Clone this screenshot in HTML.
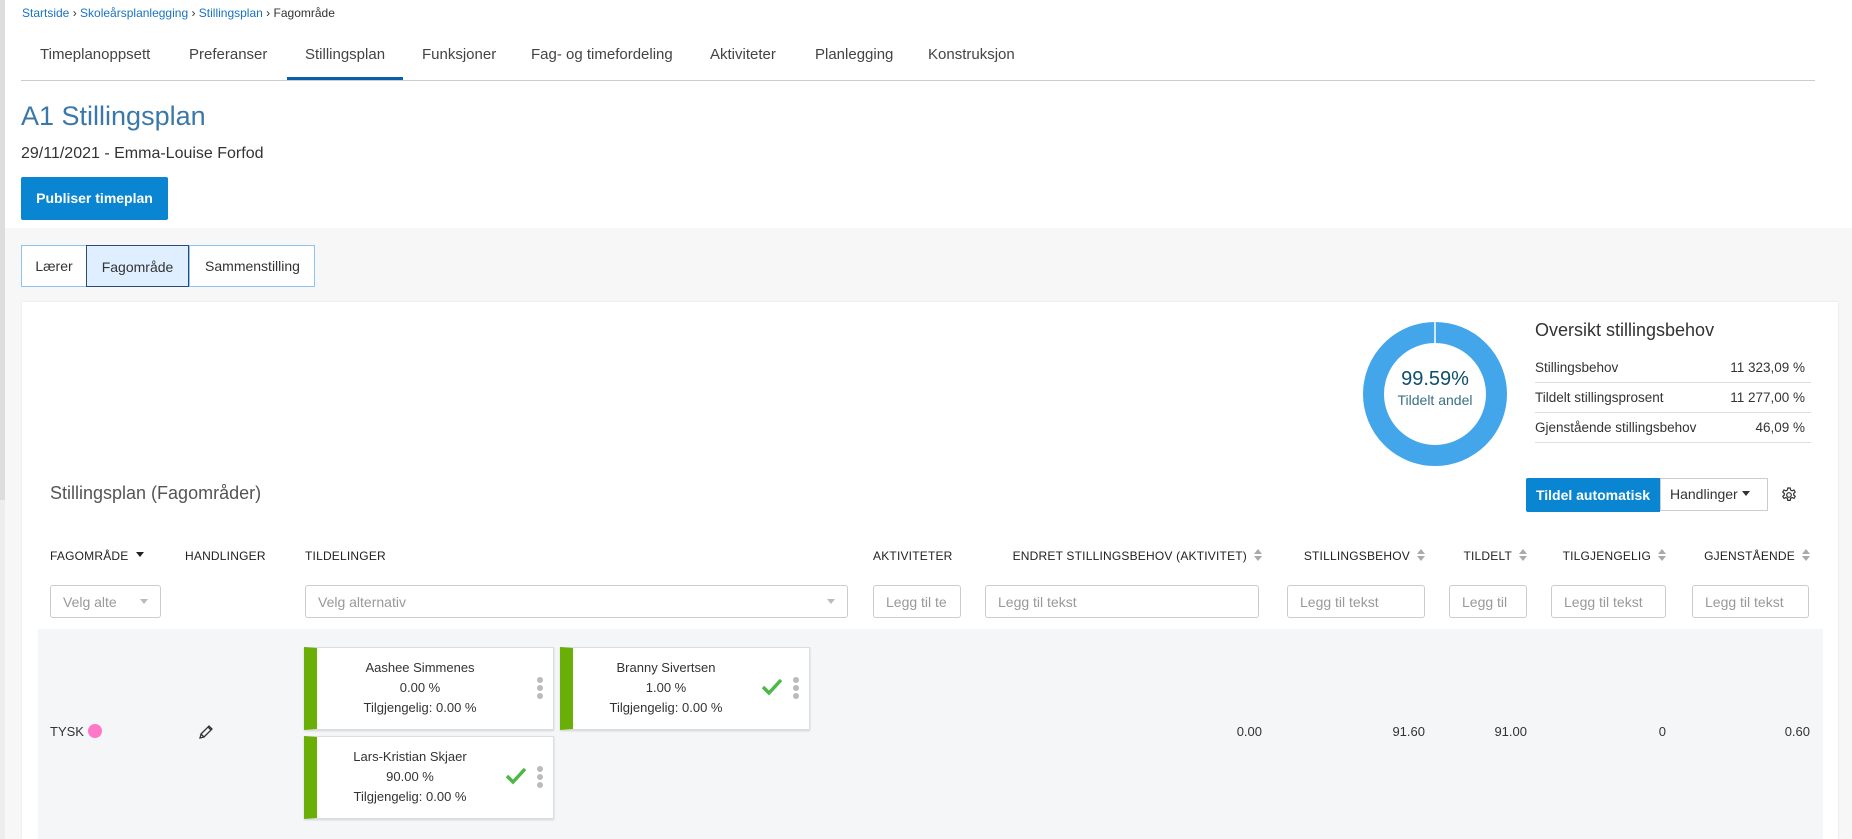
<!DOCTYPE html>
<html><head><meta charset="utf-8"><style>
*{box-sizing:border-box;margin:0;padding:0}
body{width:1852px;height:839px;overflow:hidden;background:#fff;font-family:"Liberation Sans",sans-serif;color:#333;position:relative}
.a{position:absolute;white-space:nowrap}
.bc{top:6px;font-size:12px;color:#1a73c0}
.tab{top:46px;font-size:15px;color:#444}
.hd{font-size:12px;color:#222;top:549px;letter-spacing:.2px}
.inp{position:absolute;top:585px;height:33px;border:1px solid #ccc;border-radius:3px;background:#fff;font-size:14px;color:#999;padding:8px 0 0 12px;overflow:hidden;white-space:nowrap}
.sort{display:inline-block;width:8px;height:12px;vertical-align:-1px;margin-left:7px;position:relative}
.sort:before{content:"";position:absolute;left:0;top:0;border:4px solid transparent;border-bottom:5px solid #aaa;border-top:0}
.sort:after{content:"";position:absolute;left:0;top:7px;border:4px solid transparent;border-top:5px solid #aaa;border-bottom:0}
.card{position:absolute;width:250px;height:83px;background:#fff;border:1px solid #ddd;box-shadow:0 1px 2px rgba(0,0,0,.15);border-left:13px solid #6aaf08;font-size:13px;color:#333;text-align:center;line-height:20px;padding-top:10px;padding-right:50px}
.dots{position:absolute;right:10px;top:29px;width:6px}
.dots i{display:block;width:6px;height:6px;border-radius:3px;background:#bbb;margin-bottom:2px}
.chk{position:absolute;top:30px}
.val{top:724px;font-size:13px;color:#333}
</style></head><body>
<div class="a" style="left:0;top:0;width:5px;height:500px;background:#ddd"></div>
<div class="a" style="left:0;top:500px;width:5px;height:339px;background:#eee"></div>
<div class="a bc" style="left:22px">Startside <span style="color:#333">&#x203A;</span> Skoleårsplanlegging <span style="color:#333">&#x203A;</span> Stillingsplan <span style="color:#333">&#x203A;</span> <span style="color:#333">Fagområde</span></div>
<div class="a tab" style="left:40px">Timeplanoppsett</div>
<div class="a tab" style="left:189px">Preferanser</div>
<div class="a tab" style="left:305px">Stillingsplan</div>
<div class="a tab" style="left:422px">Funksjoner</div>
<div class="a tab" style="left:531px">Fag- og timefordeling</div>
<div class="a tab" style="left:710px">Aktiviteter</div>
<div class="a tab" style="left:815px">Planlegging</div>
<div class="a tab" style="left:928px">Konstruksjon</div>
<div class="a" style="left:21px;top:80px;width:1794px;height:1px;background:#ccc"></div>
<div class="a" style="left:287px;top:77px;width:116px;height:3px;background:#0a5ea8"></div>
<div class="a" style="left:21px;top:101px;font-size:27px;color:#3b78a8">A1 Stillingsplan</div>
<div class="a" style="left:21px;top:145px;font-size:16px;color:#333">29/11/2021 - Emma-Louise Forfod</div>
<div class="a" style="left:21px;top:177px;width:147px;height:43px;background:#0a85d2;border-radius:2px;color:#fff;font-weight:bold;font-size:14px;text-align:center;line-height:43px">Publiser timeplan</div>
<div class="a" style="left:5px;top:228px;width:1847px;height:611px;background:#f7f7f7"></div>
<div class="a" style="left:21px;top:245px;width:294px;height:42px;border:1px solid #8cc4ef;background:#fff;font-size:14px"></div>
<div class="a" style="left:22px;top:246px;width:64px;height:40px;line-height:40px;text-align:center;font-size:14px">Lærer</div>
<div class="a" style="left:86px;top:245px;width:103px;height:42px;line-height:42px;text-align:center;font-size:14px;background:#dfefff;border:1px solid #2b4c6e">Fagområde</div>
<div class="a" style="left:189px;top:246px;width:126px;height:40px;line-height:40px;text-align:center;font-size:14px;border-left:1px solid #8cc4ef">Sammenstilling</div>
<div class="a" style="left:22px;top:302px;width:1816px;height:537px;background:#fff;box-shadow:0 0 2px rgba(0,0,0,.1)"></div>
<svg class="a" style="left:1363px;top:322px" width="144" height="144"><circle cx="72" cy="72" r="61.5" fill="none" stroke="#43a6ea" stroke-width="21"/><line x1="72" y1="0" x2="72" y2="21" stroke="#fff" stroke-width="1.5"/></svg>
<div class="a" style="left:1363px;top:368px;width:144px;text-align:center;font-size:20px;color:#0d4f6e">99.59%</div>
<div class="a" style="left:1363px;top:392px;width:144px;text-align:center;font-size:14px;color:#3b6f85">Tildelt andel</div>
<div class="a" style="left:1535px;top:320px;font-size:18px;color:#333">Oversikt stillingsbehov</div>
<div class="a" style="left:1535px;top:353px;width:276px;font-size:13.5px;line-height:29px">
<div style="border-bottom:1px solid #ddd;display:flex;justify-content:space-between;padding-right:6px"><span>Stillingsbehov</span><span>11 323,09 %</span></div>
<div style="border-bottom:1px solid #ddd;display:flex;justify-content:space-between;padding-right:6px"><span>Tildelt stillingsprosent</span><span>11 277,00 %</span></div>
<div style="border-bottom:1px solid #ddd;display:flex;justify-content:space-between;padding-right:6px"><span>Gjenstående stillingsbehov</span><span>46,09 %</span></div></div>
<div class="a" style="left:50px;top:483px;font-size:18px;color:#555">Stillingsplan (Fagområder)</div>
<div class="a" style="left:1526px;top:478px;width:134px;height:34px;background:#0a85d2;border-radius:2px 0 0 2px;color:#fff;font-weight:bold;font-size:14px;text-align:center;line-height:34px">Tildel automatisk</div>
<div class="a" style="left:1660px;top:478px;width:108px;height:33px;border:1px solid #ccc;font-size:14px;line-height:31px;padding-left:9px">Handlinger <span style="display:inline-block;border:4px solid transparent;border-top:5px solid #333;vertical-align:-1px"></span></div>
<svg class="a" style="left:1781px;top:487px" width="16" height="16" viewBox="0 0 16 16"><path d="M6.8 1h2.4l.4 2 1.5.8 1.9-.8 1.2 2-1.5 1.4v1.6l1.5 1.4-1.2 2-1.9-.8-1.5.8-.4 2H6.8l-.4-2-1.5-.8-1.9.8-1.2-2 1.5-1.4V6.4L1.8 5l1.2-2 1.9.8 1.5-.8z" fill="none" stroke="#333" stroke-width="1.2"/><circle cx="8" cy="8" r="2.3" fill="none" stroke="#333" stroke-width="1.2"/></svg>
<div class="a hd" style="left:50px">FAGOMRÅDE <span style="display:inline-block;border:4px solid transparent;border-top:5px solid #222;vertical-align:-1px;margin-left:4px"></span></div>
<div class="a hd" style="left:185px">HANDLINGER</div>
<div class="a hd" style="left:305px">TILDELINGER</div>
<div class="a hd" style="left:873px">AKTIVITETER</div>
<div class="a hd" style="right:590px">ENDRET STILLINGSBEHOV (AKTIVITET)<span class="sort"></span></div>
<div class="a hd" style="right:427px">STILLINGSBEHOV<span class="sort"></span></div>
<div class="a hd" style="right:325px">TILDELT<span class="sort"></span></div>
<div class="a hd" style="right:186px">TILGJENGELIG<span class="sort"></span></div>
<div class="a hd" style="right:42px">GJENSTÅENDE<span class="sort"></span></div>
<div class="inp" style="left:50px;width:111px">Velg alte<span style="position:absolute;right:12px;top:13px;border:4px solid transparent;border-top:5px solid #bbb"></span></div>
<div class="inp" style="left:305px;width:543px">Velg alternativ<span style="position:absolute;right:12px;top:13px;border:4px solid transparent;border-top:5px solid #bbb"></span></div>
<div class="inp" style="left:873px;width:88px">Legg til te</div>
<div class="inp" style="left:985px;width:274px">Legg til tekst</div>
<div class="inp" style="left:1287px;width:138px">Legg til tekst</div>
<div class="inp" style="left:1449px;width:78px">Legg til</div>
<div class="inp" style="left:1551px;width:115px">Legg til tekst</div>
<div class="inp" style="left:1692px;width:117px">Legg til tekst</div>
<div class="a" style="left:38px;top:629px;width:1785px;height:210px;background:#f4f6f8"></div>
<div class="a" style="left:50px;top:724px;font-size:13px">TYSK <span style="display:inline-block;width:14px;height:14px;border-radius:7px;background:#ff77c8;vertical-align:-2px"></span></div>
<svg class="a" style="left:198px;top:724px" width="16" height="16" viewBox="0 0 16 16"><path d="M2 14l1-4 8-8 3 3-8 8zM10 3l3 3M3 10l3 3" fill="none" stroke="#333" stroke-width="1.3"/></svg>
<div class="card" style="left:304px;top:647px;padding-right:30px">Aashee Simmenes<br>0.00 %<br>Tilgjengelig: 0.00 %<div class="dots"><i></i><i></i><i></i></div></div>
<div class="card" style="left:560px;top:647px">Branny Sivertsen<br>1.00 %<br>Tilgjengelig: 0.00 %<svg class="chk" style="right:26px" width="22" height="18" viewBox="0 0 22 18"><path d="M2 9l6 6L20 2" fill="none" stroke="#4cb848" stroke-width="3.5"/></svg><div class="dots"><i></i><i></i><i></i></div></div>
<div class="card" style="left:304px;top:736px">Lars-Kristian Skjaer<br>90.00 %<br>Tilgjengelig: 0.00 %<svg class="chk" style="right:26px" width="22" height="18" viewBox="0 0 22 18"><path d="M2 9l6 6L20 2" fill="none" stroke="#4cb848" stroke-width="3.5"/></svg><div class="dots"><i></i><i></i><i></i></div></div>
<div class="a val" style="right:590px">0.00</div>
<div class="a val" style="right:427px">91.60</div>
<div class="a val" style="right:325px">91.00</div>
<div class="a val" style="right:186px">0</div>
<div class="a val" style="right:42px">0.60</div>
</body></html>
